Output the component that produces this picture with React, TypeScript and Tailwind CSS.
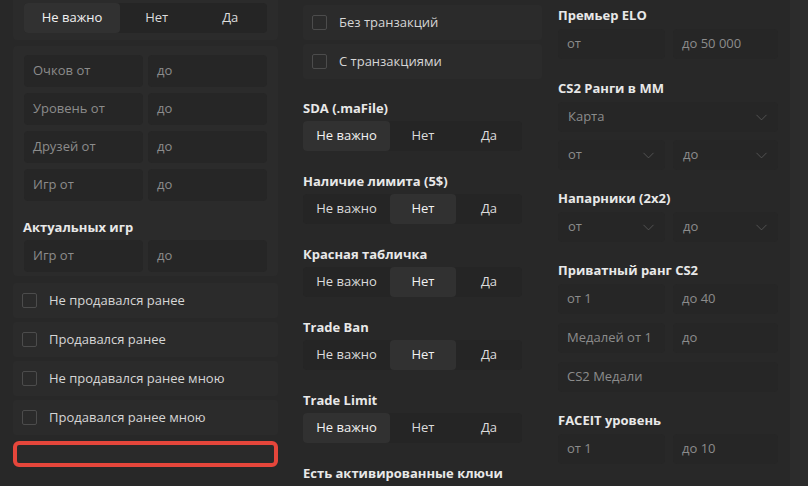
import { ChevronDown } from "lucide-react";

type Seg = { label: string; active: number };

function Segmented({ active, first }: { active: number; first: string }) {
  const opts = ["Не важно", "Нет", "Да"];
  return (
    <div className={`grid ${first} h-[30px] rounded-[4px] bg-[#252525]`}>
      {opts.map((o, i) => (
        <div
          key={o}
          className={`flex items-center justify-center rounded-[4px] text-[13px] ${
            i === active ? "bg-[#313131] text-[#f2f2f2]" : "text-[#dcdcdc]"
          }`}
        >
          {o}
        </div>
      ))}
    </div>
  );
}

function Input({ text, h = "h-[30px]", className = "" }: { text: string; h?: string; className?: string }) {
  return (
    <div className={`flex items-center ${h} rounded-[4px] bg-[#262626] px-[9px] text-[13px] text-[#8c8c8c] ${className}`}>
      {text}
    </div>
  );
}

function Select({ text, className = "" }: { text: string; className?: string }) {
  return (
    <div className={`flex h-[30px] items-center justify-between rounded-[4px] bg-[#262626] pl-[10px] pr-[7px] text-[13px] text-[#8c8c8c] ${className}`}>
      <span>{text}</span>
      <ChevronDown size={19} strokeWidth={1} className="text-[#5c5c5c]" />
    </div>
  );
}

function Check({ text }: { text: string }) {
  return (
    <div className="flex h-[35px] items-center gap-[12px] rounded-[3px] bg-[#2b2b2b] pl-[9px]">
      <span className="h-[15px] w-[15px] rounded-[2px] border-[1.5px] border-[#4c4c4c]" />
      <span className="text-[13px] text-[#d6d6d6]">{text}</span>
    </div>
  );
}

function Label({ text }: { text: string }) {
  return <div className="h-[18px] text-[13px] font-bold leading-[18px] text-[#e8e8e8]">{text}</div>;
}

const middleGroups: Seg[] = [
  { label: "SDA (.maFile)", active: 0 },
  { label: "Наличие лимита (5$)", active: 1 },
  { label: "Красная табличка", active: 1 },
  { label: "Trade Ban", active: 1 },
  { label: "Trade Limit", active: 0 },
];

export default function App() {
  return (
    <div
      className="flex h-[486px] w-[808px] overflow-hidden bg-[#282828]"
      style={{ fontFamily: '"Open Sans", "Noto Sans", sans-serif' }}
    >
      {/* left column */}
      <div className="flex w-[290px] shrink-0 flex-col pl-[13px] pr-[12px]">
        <div className="rounded-b-[4px] bg-[#2b2b2b] px-[11px] pb-[7px] pt-[3px]">
          <Segmented active={0} first="grid-cols-[96px_1fr_1fr]" />
        </div>
        <div className="mt-[6px] flex flex-col rounded-[4px] bg-[#2b2b2b] px-[11px] pb-[4px] pt-[9px]">
          {["Очков от", "Уровень от", "Друзей от", "Игр от"].map((t) => (
            <div key={t} className="mb-[6px] grid grid-cols-2 gap-[5px]">
              <Input text={t} h="h-[32px]" />
              <Input text="до" h="h-[32px]" />
            </div>
          ))}
          <div className="-ml-[1px] mt-[11px]">
            <Label text="Актуальных игр" />
          </div>
          <div className="mt-[4px] grid grid-cols-2 gap-[5px]">
            <Input text="Игр от" h="h-[32px]" />
            <Input text="до" h="h-[32px]" />
          </div>
        </div>
        <div className="mt-[7px] flex flex-col gap-[4px]">
          {["Не продавался ранее", "Продавался ранее", "Не продавался ранее мною", "Продавался ранее мною"].map((t) => (
            <Check key={t} text={t} />
          ))}
        </div>
        <div className="mt-[6px] h-[26px] rounded-[6px] border-[4px] border-[#e5463b] bg-[#2a2a2a]" />
      </div>

      {/* middle column */}
      <div className="flex w-[255px] shrink-0 flex-col pl-[13px] pr-[23px]">
        <div className="-mr-[20px] flex flex-col gap-[4px] pt-[5px]">
          <Check text="Без транзакций" />
          <Check text="С транзакциями" />
        </div>
        <div className="mt-[20px] flex flex-col gap-[21px]">
          {middleGroups.map((g) => (
            <div key={g.label} className="flex flex-col gap-[4px]">
              <Label text={g.label} />
              <Segmented active={g.active} first="grid-cols-[87px_1fr_1fr]" />
            </div>
          ))}
          <Label text="Есть активированные ключи" />
        </div>
      </div>

      {/* right column */}
      <div className="flex w-[245px] shrink-0 flex-col pl-[13px] pr-[12px] pt-[6px]">
        <Label text="Премьер ELO" />
        <div className="mt-[5px] grid grid-cols-[107px_1fr] gap-[8px]">
          <Input text="от" />
          <Input text="до 50 000" />
        </div>

        <div className="mt-[20px]">
          <Label text="CS2 Ранги в ММ" />
        </div>
        <Select text="Карта" className="mt-[5px]" />
        <div className="mt-[8px] grid grid-cols-[107px_1fr] gap-[8px]">
          <Select text="от" />
          <Select text="до" />
        </div>

        <div className="mt-[19px]">
          <Label text="Напарники (2x2)" />
        </div>
        <div className="mt-[5px] grid grid-cols-[107px_1fr] gap-[8px]">
          <Select text="от" />
          <Select text="до" />
        </div>

        <div className="mt-[19px]">
          <Label text="Приватный ранг CS2" />
        </div>
        <div className="mt-[5px] grid grid-cols-[107px_1fr] gap-[8px]">
          <Input text="от 1" />
          <Input text="до 40" />
        </div>
        <div className="mt-[9px] grid grid-cols-[107px_1fr] gap-[8px]">
          <Input text="Медалей от 1" />
          <Input text="до" />
        </div>
        <Input text="CS2 Медали" className="mt-[9px]" />

        <div className="mt-[19px]">
          <Label text="FACEIT уровень" />
        </div>
        <div className="mt-[5px] grid grid-cols-[107px_1fr] gap-[8px]">
          <Input text="от 1" />
          <Input text="до 10" />
        </div>
      </div>

      <div className="flex-1 bg-[#2c2c2c]" />
    </div>
  );
}
